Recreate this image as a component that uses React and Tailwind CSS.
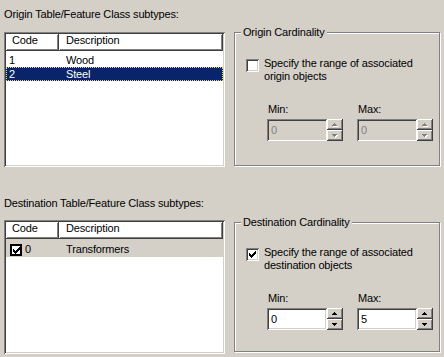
const sunken =
  "shadow-[inset_1px_1px_0_#808080,inset_-1px_-1px_0_#fff,inset_2px_2px_0_#404040,inset_-2px_-2px_0_#d4d0c8]";
const raised =
  "shadow-[inset_-1px_-1px_0_#404040,inset_1px_1px_0_#fff,inset_-2px_-2px_0_#808080]";

// classic 7x7 check mark, drawn column by column
function CheckMark() {
  const tops = [2, 3, 4, 3, 2, 1, 0];
  return (
    <svg width="7" height="7" viewBox="0 0 7 7" shapeRendering="crispEdges">
      {tops.map((y, x) => (
        <rect key={x} x={x} y={y} width="1" height="3" fill="#000" />
      ))}
    </svg>
  );
}

function CheckBox({ checked }) {
  return (
    <div className={`w-[13px] h-[13px] shrink-0 bg-white flex items-center justify-center ${sunken}`}>
      {checked && <CheckMark />}
    </div>
  );
}

function Arrow({ down, disabled }) {
  const rows = down
    ? [
        [0, 5],
        [1, 3],
        [2, 1],
      ]
    : [
        [2, 1],
        [1, 3],
        [0, 5],
      ];
  return (
    <svg width="6" height="4" viewBox="0 0 6 4" shapeRendering="crispEdges">
      {disabled &&
        rows.map(([x, w], y) => (
          <rect key={"s" + y} x={x + 1} y={y + 1} width={w} height="1" fill="#fff" />
        ))}
      {rows.map(([x, w], y) => (
        <rect key={y} x={x} y={y} width={w} height="1" fill={disabled ? "#808080" : "#000"} />
      ))}
    </svg>
  );
}

function SpinField({ label, value, disabled }) {
  return (
    <div className="flex flex-col">
      <div className="leading-[13px] pl-[1px]">{label}</div>
      <div className="flex mt-[3px]">
        <div
          className={`w-[60px] h-[22px] pl-[4px] leading-[22px] ${sunken} ${
            disabled ? "bg-[#d4d0c8] text-[#808080]" : "bg-white"
          }`}
        >
          {value}
        </div>
        <div className="flex flex-col w-[16px] h-[22px]">
          <div className={`h-[11px] flex items-center justify-center pl-[1px] ${raised}`}>
            <Arrow disabled={disabled} />
          </div>
          <div className={`h-[11px] flex items-center justify-center pl-[1px] ${raised}`}>
            <Arrow down disabled={disabled} />
          </div>
        </div>
      </div>
    </div>
  );
}

function Cardinality({ title, objects, enabled, min, max, className }) {
  return (
    <div
      className={`relative w-[207px] border border-[#808080] shadow-[inset_1px_1px_0_#fff,1px_1px_0_#fff] pl-[11px] ${className}`}
    >
      <span className="absolute -top-[7px] left-[6px] px-[2px] bg-[#d4d0c8] leading-[13px]">
        {title}
      </span>
      <div className="flex items-start gap-[5px]">
        <CheckBox checked={enabled} />
        <div className="-mt-[2px] leading-[13px]">
          Specify the range of associated
          <br />
          {objects} objects
        </div>
      </div>
      <div className="flex gap-[14px] ml-[21px] mt-[20px]">
        <SpinField label="Min:" value={min} disabled={!enabled} />
        <SpinField label="Max:" value={max} disabled={!enabled} />
      </div>
    </div>
  );
}

function Header() {
  return (
    <div className="flex h-[17px]">
      <div className={`w-[53px] pl-[6px] leading-[13px] ${raised}`}>Code</div>
      <div className={`flex-1 pl-[7px] leading-[13px] ${raised}`}>Description</div>
    </div>
  );
}

export default function App() {
  return (
    <div className="w-[444px] h-[357px] overflow-hidden bg-[#d4d0c8] text-black text-[11px] tracking-[-0.15px] font-['Liberation_Sans',Arial,sans-serif] pt-[8px] px-[4px]">
      <div className="leading-[13px]">Origin Table/Feature Class subtypes:</div>
      <div className="flex items-start mt-[11px]">
        <div className={`w-[222px] h-[135px] bg-white p-[2px] ${sunken}`}>
          <Header />
          <div className="mt-[2px]">
            <div className="flex h-[14px] leading-[14px]">
              <div className="w-[53px] pl-[3px]">1</div>
              <div className="pl-[7px]">Wood</div>
            </div>
            <div className="flex h-[14px] leading-[14px] bg-[#0a246a] text-white outline-1 outline-dotted -outline-offset-1 outline-[#e6d68a]">
              <div className="w-[53px] pl-[3px]">2</div>
              <div className="pl-[7px]">Steel</div>
            </div>
          </div>
        </div>
        <Cardinality
          title="Origin Cardinality"
          objects="origin"
          enabled={false}
          min="0"
          max="0"
          className="ml-[9px] h-[134px] pt-[26px]"
        />
      </div>

      <div className="leading-[13px] mt-[30px]">Destination Table/Feature Class subtypes:</div>
      <div className="flex items-start mt-[10px]">
        <div className={`w-[222px] h-[134px] bg-white p-[2px] ${sunken}`}>
          <Header />
          <div className="flex h-[18px] bg-[#d4d0c8]">
            <div className="w-[53px] pl-[4px] flex items-start">
              <div className="mt-[5px] w-[12px] h-[12px] border-2 border-black bg-white flex items-center justify-center">
                <svg width="7" height="7" viewBox="0 0 7 7" shapeRendering="crispEdges">
                  {[2, 3, 4, 3, 2, 1, 0].map((y, x) => (
                    <rect key={x} x={x - 0.5} y={y - 0.5} width="1" height="3" fill="#000" />
                  ))}
                </svg>
              </div>
              <span className="ml-[3px] mt-[4px] leading-[13px]">0</span>
            </div>
            <div className="pl-[7px] pt-[4px] leading-[13px]">Transformers</div>
          </div>
        </div>
        <Cardinality
          title="Destination Cardinality"
          objects="destination"
          enabled={true}
          min="0"
          max="5"
          className="ml-[9px] mt-[2px] h-[130px] pt-[25px]"
        />
      </div>
    </div>
  );
}
